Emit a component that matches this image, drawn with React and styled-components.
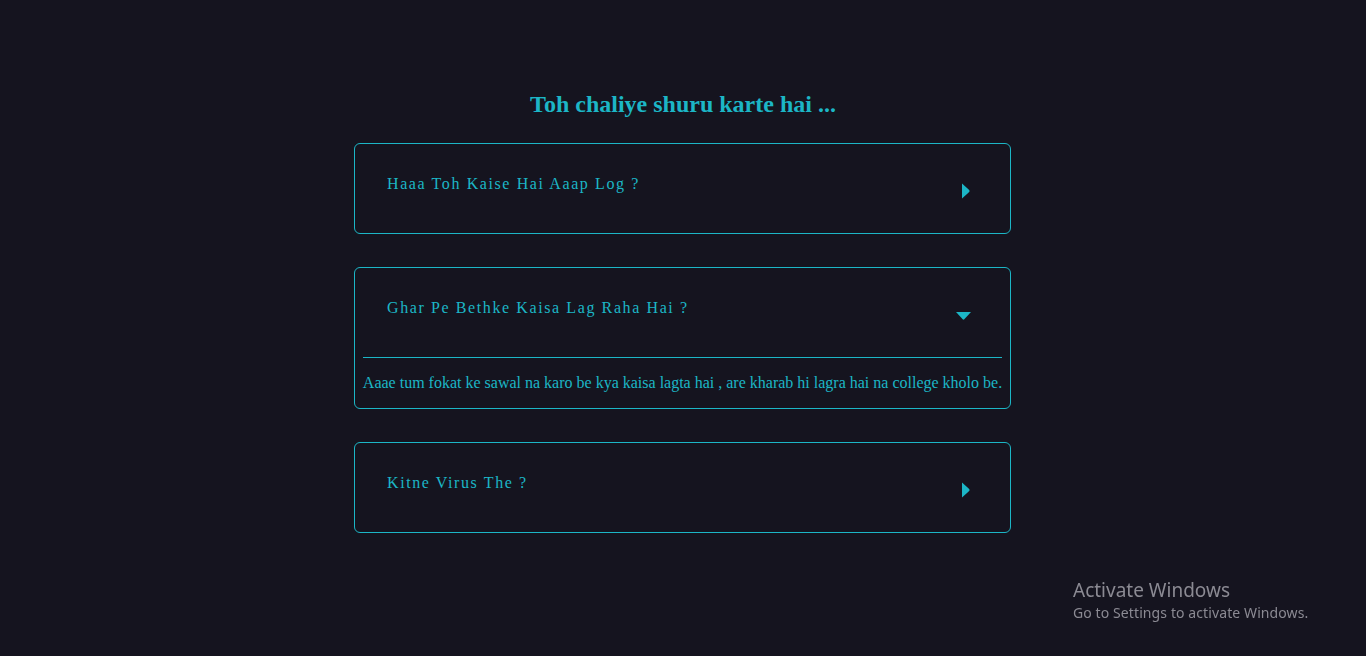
import React, { useState } from 'react';
import styled, { createGlobalStyle } from 'styled-components';

const faqs = [
  {
    q: 'Haaa Toh Kaise Hai Aaap Log ?',
    a: 'Bas badhiya hai , aap batao kaise ho.',
  },
  {
    q: 'Ghar Pe Bethke Kaisa Lag Raha Hai ?',
    a: 'Aaae tum fokat ke sawal na karo be kya kaisa lagta hai , are kharab hi lagra hai na college kholo be.',
  },
  {
    q: 'Kitne Virus The ?',
    a: 'Pata nahi be , gin ke nahi rakhe.',
  },
];

const CaretRight = () => (
  <svg width="8" height="16" viewBox="0 0 8 16">
    <path d="M0 0.5 L7.2 7.1 Q8 8 7.2 8.9 L0 15.5 Z" fill="currentColor" />
  </svg>
);

const CaretDown = () => (
  <svg width="15" height="8" viewBox="0 0 15 8">
    <path d="M0 0 L15 0 L8.3 7.3 Q7.5 8 6.7 7.3 Z" fill="currentColor" />
  </svg>
);

function FaqItem({ q, a, open, onToggle }) {
  return (
    <Card>
      <Header onClick={onToggle}>
        <Question>{q}</Question>
        <Toggle $open={open}>{open ? <CaretDown /> : <CaretRight />}</Toggle>
      </Header>
      {open && (
        <>
          <Divider />
          <Answer>{a}</Answer>
        </>
      )}
    </Card>
  );
}

export default function App() {
  const [openIdx, setOpenIdx] = useState(1);

  return (
    <>
      <GlobalStyle />
      <Page>
        <Title>Toh chaliye shuru karte hai ...</Title>
        <List>
          {faqs.map((f, i) => (
            <FaqItem
              key={i}
              q={f.q}
              a={f.a}
              open={openIdx === i}
              onToggle={() => setOpenIdx(openIdx === i ? -1 : i)}
            />
          ))}
        </List>
      </Page>
      <Watermark>
        <span>Activate Windows</span>
        <small>Go to Settings to activate Windows.</small>
      </Watermark>
    </>
  );
}

const accent = '#1cb6c6';

const GlobalStyle = createGlobalStyle`
  html, body {
    margin: 0;
    padding: 0;
    background: #15141f;
    min-height: 100%;
  }
  body {
    font-family: "Liberation Serif", "Times New Roman", serif;
  }
`;

const Page = styled.main`
  min-height: 656px;
  box-sizing: border-box;
  padding-top: 90px;
  display: flex;
  flex-direction: column;
  align-items: center;
`;

const Title = styled.h2`
  margin: 0 0 25px;
  font-size: 24px;
  line-height: 28px;
  font-weight: bold;
  color: ${accent};
`;

const List = styled.div`
  width: 657px;
  margin-left: -1px;
  display: flex;
  flex-direction: column;
  gap: 33px;
`;

const Card = styled.div`
  border: 1px solid ${accent};
  border-radius: 6px;
  display: flex;
  flex-direction: column;
`;

const Header = styled.div`
  height: 89px;
  box-sizing: border-box;
  padding: 0 40px 0 32px;
  display: flex;
  align-items: center;
  justify-content: space-between;
  cursor: pointer;
`;

const Question = styled.h4`
  margin: 0 0 9px;
  font-size: 16px;
  font-weight: normal;
  letter-spacing: 1.6px;
  line-height: 18px;
  color: ${accent};
`;

const Toggle = styled.span`
  display: flex;
  color: ${accent};
  margin-top: ${p => (p.$open ? '7px' : '5px')};
  margin-right: ${p => (p.$open ? '-1px' : '0')};
`;

const Divider = styled.div`
  margin: 0 8px;
  height: 1px;
  background: ${accent};
`;

const Answer = styled.p`
  margin: 0;
  padding: 16px 0;
  text-align: center;
  font-size: 16px;
  line-height: 18px;
  color: ${accent};
`;

const Watermark = styled.div`
  position: fixed;
  left: 1073px;
  top: 578px;
  display: flex;
  flex-direction: column;
  font-family: "Noto Sans", "Open Sans", sans-serif;
  color: #8b8a93;

  span {
    font-size: 19px;
    line-height: 25px;
  }

  small {
    font-size: 14px;
    letter-spacing: 0.1px;
    line-height: 20px;
  }
`;
